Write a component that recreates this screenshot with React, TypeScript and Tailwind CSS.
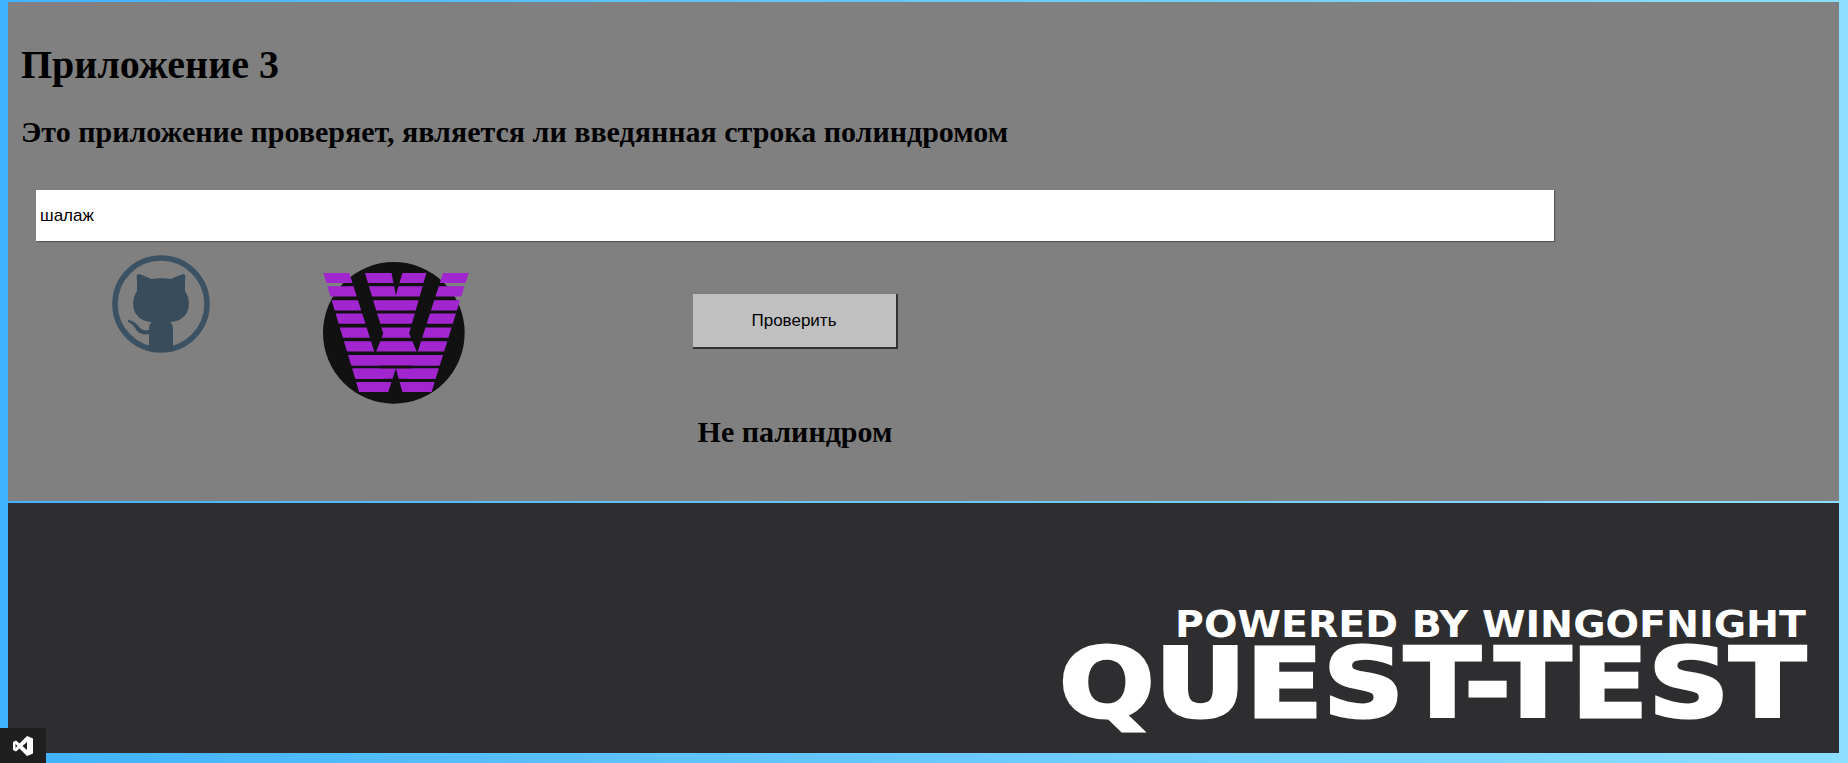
import React from 'react';

const stripeTops = [97, 138, 180, 220, 262, 303, 345, 385, 426];

function GithubMark() {
  return (
    <svg viewBox="0 0 100 100" className="w-[100px] h-[100px] shrink-0">
      <defs>
        <clipPath id="ghClip">
          <circle cx="50" cy="50" r="48" />
        </clipPath>
      </defs>
      <circle cx="50" cy="50" r="46" fill="none" stroke="#3c5263" strokeWidth="5.5" />
      <g clipPath="url(#ghClip)" fill="#384c5b">
        <path d="M26 26 C25 22 26 20 28 20 C32 21 36 23 40 25 C46 24 54 24 60 25 C64 23 69 21 72 20 C74 20 75 22 74 26 L74 37 C79 44 79 54 75 60 C71 66 64 68 59 68 C62 70 62 74 62 78 L62 100 L38 100 L38 78 C38 74 38 70 41 68 C36 68 29 66 25 60 C21 54 21 44 26 37 Z" />
        <path d="M17 66 C22 66 26 70 28 73 C31 76 34 77 38 76 L38 80 C33 81 29 80 26 77 C24 74 22 70 17 68 Z" />
      </g>
    </svg>
  );
}

function WingLogo() {
  return (
    <svg viewBox="690 60 460 440" className="w-[153px] h-[147px] shrink-0">
      <defs>
        <clipPath id="wStripes">
          {stripeTops.map((y) => (
            <rect key={y} x="680" y={y} width="480" height="31" />
          ))}
        </clipPath>
      </defs>
      <circle cx="912" cy="278" r="213" fill="#111111" />
      <g clipPath="url(#wStripes)" fill="#a226d0">
        <polygon points="700,97 778,97 862,362 895,457 808,457" />
        <polygon points="1060,97 1137,97 1025,457 938,457 975,362" />
        <polygon points="825,97 905,97 918,165 938,97 1010,97 958,280 985,345 855,345 880,280" />
        <polygon points="780,345 1056,345 1025,457 938,457 918,385 895,457 808,457" />
      </g>
    </svg>
  );
}

function VsIcon() {
  return (
    <svg viewBox="0 0 20 20" className="w-5 h-5">
      <path
        fill="#ffffff"
        fillRule="evenodd"
        d="M14 0 L20 2.5 V17.5 L14 20 L6.5 12.5 L3 15.5 L0 14 V6 L3 4.5 L6.5 7.5 Z M14 6 L9.5 10 L14 14 Z M2.5 8 V12 L4.5 10 Z"
      />
    </svg>
  );
}

function QuestLogo() {
  return (
    <svg viewBox="0 0 750 140" className="w-[750px] h-[140px]" fontFamily="'DejaVu Sans', sans-serif" fontWeight="700" fill="#ffffff">
      <text x="116" y="37" fontSize="37" textLength="631" lengthAdjust="spacingAndGlyphs">
        POWERED BY WINGOFNIGHT
      </text>
      <text x="0" y="117" fontSize="97" textLength="747" lengthAdjust="spacingAndGlyphs" stroke="#ffffff" strokeWidth="3">
        QUEST-TEST
      </text>
    </svg>
  );
}

export default function App() {
  return (
    <div className="relative h-[763px] w-full overflow-hidden bg-gradient-to-r from-[#3fb2ff] to-[#8bdeff] pt-[2px] pl-2 pr-[9px] pb-[10px] flex flex-col">
      <main className="h-[499px] bg-[#808080] text-black font-['Liberation_Serif',serif]">
        <h1 className="pt-[40px] pl-[13px] text-[40px] leading-[46px] font-bold">Приложение 3</h1>
        <h2 className="mt-[27px] pl-[13px] text-[30px] leading-[34px] font-bold">
          Это приложение проверяет, является ли введянная строка полиндромом
        </h2>
        <input
          readOnly
          value="шалаж"
          className="mt-[41px] ml-[28px] block h-[51px] w-[1518px] bg-white px-[4px] text-[17px] text-black font-['Liberation_Sans',sans-serif] shadow-[1px_1px_1px_#555555] outline-none"
        />
        <div className="flex items-start pl-[103px]">
          <div className="pt-[13px]">
            <GithubMark />
          </div>
          <div className="ml-[109px] pt-[19px]">
            <WingLogo />
          </div>
          <div className="ml-[172px] pt-[53px] flex flex-col items-center w-[300px]">
            <button className="h-[55px] w-[205px] bg-[#c0c0c0] border-r-2 border-b-2 border-[#333333] text-[17px] text-black font-['Liberation_Sans',sans-serif]">
              Проверить
            </button>
            <p className="mt-[66px] text-[30px] leading-[34px] font-bold">Не палиндром</p>
          </div>
        </div>
      </main>
      <footer className="mt-[2px] flex-1 bg-[#2e2e30] flex items-end justify-end pr-[30px] pb-[13px]">
        <QuestLogo />
      </footer>
      <div className="absolute left-0 bottom-0 flex h-[35px] w-[46px] items-center justify-center bg-[#1f1f1f]">
        <VsIcon />
      </div>
    </div>
  );
}
